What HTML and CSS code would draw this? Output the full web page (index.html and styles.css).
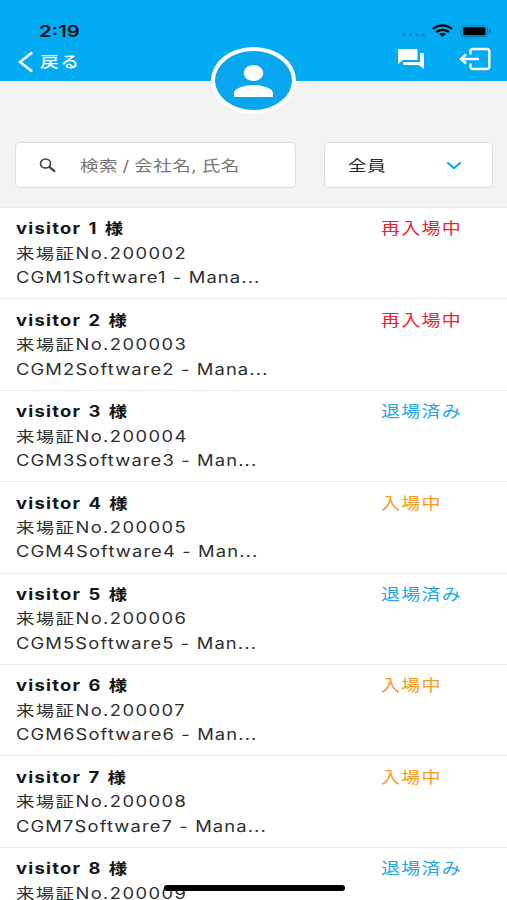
FILE: index.html
```html
<!DOCTYPE html>
<html lang="ja">
<head>
<meta charset="utf-8">
<title>来場者一覧</title>
<link rel="stylesheet" href="styles.css">
</head>
<body>
<header class="header">
  <div class="status">
    <span class="time">2:19</span>
    <svg class="signals" width="94" height="16" viewBox="0 0 94 16">
      <g fill="#1281b5"><circle cx="5" cy="12" r="1.5"/><circle cx="11.500" cy="12" r="1.5"/><circle cx="18" cy="12" r="1.5"/><circle cx="24.500" cy="12" r="1.5"/></g>
      <g fill="none" stroke="#000" stroke-width="2.300"><path d="M33.800 5.900Q43.500 -1.200 53.200 5.900"/><path d="M37.200 9Q43.500 4.600 49.800 9"/></g>
      <path d="M40 11Q43.500 8.800 47 11L43.500 13.800Z"/>
      <rect x="61.800" y="2.700" width="26.600" height="11" rx="3" fill="none" stroke="#0878a8"/>
      <rect x="64" y="4.200" width="22.500" height="8" rx="1.500"/>
      <path d="M90 6v4.500q2-.7 2-2.250t-2-2.250Z" fill="#0878a8"/>
    </svg>
  </div>
  <nav class="nav">
    <a class="back">
      <svg width="16" height="22" viewBox="0 0 16 22"><path d="M14.200 1.500L2 11L14.200 20.500" fill="none" stroke="#fff" stroke-width="2.500"/></svg>
      <span class="back-label">戻る</span>
    </a>
    <div class="actions">
      <svg width="26" height="20" viewBox="2 2 20 20" preserveAspectRatio="none" fill="#fff"><path d="M21 6h-2v9H6v2c0 .55.45 1 1 1h11l4 4V7c0-.55-.45-1-1-1zm-4 6V3c0-.55-.45-1-1-1H3c-.55 0-1 .45-1 1v14l4-4h10c.55 0 1-.45 1-1z"/></svg>
      <svg width="32" height="24" viewBox="0 0 32 24" fill="none" stroke="#fff" stroke-width="2.400"><path d="M11.500 7.500V4.500Q11.500 2 14.500 2H27.500Q30.300 2 30.300 4.500V19.500Q30.300 22 27.500 22H14.500Q11.500 22 11.500 19.500V16.500"/><path d="M20 12H2M7 7.500L2 12L7 16.500"/></svg>
    </div>
  </nav>
  <div class="avatar">
    <svg width="39" height="32" viewBox="4 4 16 16" preserveAspectRatio="none" fill="#fff"><path d="M12 12c2.210 0 4-1.790 4-4s-1.790-4-4-4-4 1.790-4 4 1.790 4 4 4zm0 2c-2.670 0-8 1.340-8 4v2h16v-2c0-2.660-5.330-4-8-4z"/></svg>
  </div>
</header>
<section class="filters">
  <div class="field search">
    <svg width="17" height="15" viewBox="0 0 17 15" fill="none" stroke="#444"><ellipse cx="6.500" cy="5.500" rx="5" ry="4.500" stroke-width="1.700"/><path d="M10.300 8.800L16 13.700" stroke-width="2.300"/></svg>
    <span class="placeholder">検索 / 会社名, 氏名</span>
  </div>
  <div class="field select">
    <span class="selected">全員</span>
    <svg width="16" height="9" viewBox="0 0 16 9"><path d="M1.300 1.500L8 7L14.700 1.500" fill="none" stroke="#13a7e8" stroke-width="2.200"/></svg>
  </div>
</section>
<main class="list">
  <article class="row"><div class="info"><b>visitor 1 様</b><span class="pass">来場証No.200002</span><span>CGM1Software1 - Mana...</span></div><span class="state again">再入場中</span></article>
  <article class="row"><div class="info"><b>visitor 2 様</b><span class="pass">来場証No.200003</span><span>CGM2Software2 - Mana...</span></div><span class="state again">再入場中</span></article>
  <article class="row"><div class="info"><b>visitor 3 様</b><span class="pass">来場証No.200004</span><span>CGM3Software3 - Man...</span></div><span class="state left">退場済み</span></article>
  <article class="row"><div class="info"><b>visitor 4 様</b><span class="pass">来場証No.200005</span><span>CGM4Software4 - Man...</span></div><span class="state inside">入場中</span></article>
  <article class="row"><div class="info"><b>visitor 5 様</b><span class="pass">来場証No.200006</span><span>CGM5Software5 - Man...</span></div><span class="state left">退場済み</span></article>
  <article class="row"><div class="info"><b>visitor 6 様</b><span class="pass">来場証No.200007</span><span>CGM6Software6 - Man...</span></div><span class="state inside">入場中</span></article>
  <article class="row"><div class="info"><b>visitor 7 様</b><span class="pass">来場証No.200008</span><span>CGM7Software7 - Mana...</span></div><span class="state inside">入場中</span></article>
  <article class="row"><div class="info"><b>visitor 8 様</b><span class="pass">来場証No.200009</span></div><span class="state left">退場済み</span></article>
</main>
<div class="home-bar"></div>
</body>
</html>
```
FILE: styles.css
```css
* { box-sizing: border-box; }
body {
  margin: 0;
  height: 900px;
  overflow: hidden;
  position: relative;
  background: #fff;
  color: #2e2e2e;
  font-family: Inter, "Noto Sans CJK JP", sans-serif;
  font-size: 15.3px;
}
svg { display: block; flex: none; }
.header {
  position: relative;
  height: 82px;
  padding-top: 20px;
  background: #03abf3;
  border-bottom: 1px solid #fff;
}
.status {
  display: flex;
  justify-content: space-between;
  height: 24px;
  padding: 3px 14px 0 39px;
}
.time {
  font-size: 15.5px;
  font-weight: 600;
  line-height: 17px;
  color: #06151c;
  transform: scaleX(1.31);
  transform-origin: left;
}
.nav {
  display: flex;
  justify-content: space-between;
  height: 32px;
  padding: 3px 16px 0 18px;
}
.back { display: flex; gap: 6px; height: 32px; padding-top: 4px; }
.back-label {
  color: #fff;
  font-weight: 500;
  line-height: 22px;
  letter-spacing: 1.2px;
  transform: scaleX(1.22);
  transform-origin: left;
}
.actions { display: flex; gap: 35px; }
.actions svg:first-child { margin-top: 2px; }
.avatar {
  position: absolute;
  left: 211px;
  top: 47px;
  width: 85px;
  height: 67px;
  border: 4px solid #fff;
  border-radius: 50%;
  background: #08a6ef;
  display: flex;
  align-items: center;
  justify-content: center;
}
.filters {
  display: flex;
  gap: 28px;
  height: 126px;
  padding: 60px 14px 0 15px;
  background: #f3f3f3;
  border-bottom: 1px solid #ebebeb;
}
.field {
  display: flex;
  align-items: center;
  height: 46px;
  background: #fff;
  border: 1px solid #dedede;
  border-radius: 5px;
}
.search { width: 281px; padding-left: 23px; gap: 24px; }
.select { width: 169px; padding: 0 30px 0 23px; justify-content: space-between; }
.placeholder, .selected {
  white-space: nowrap;
  letter-spacing: .7px;
  margin-top: -2px;
  transform: scaleX(1.21);
  transform-origin: left;
}
.placeholder { color: #757575; letter-spacing: .4px; word-spacing: -.9px; }
.row {
  display: flex;
  height: 91.4px;
  padding: 9.4px 16px 0 15.5px;
  border-bottom: 1px solid #ebebeb;
}
.row:last-child { height: 83px; border-bottom: 0; }
.info {
  display: flex;
  flex-direction: column;
  width: 365px;
}
.info b, .info span, .state {
  line-height: 24.4px;
  height: 24.4px;
  white-space: nowrap;
  letter-spacing: .94px;
  transform: scaleX(1.2);
  transform-origin: left;
}
.info b { font-weight: 700; color: #151515; letter-spacing: 1.05px; word-spacing: 1.3px; }
.info .pass { letter-spacing: 1.2px; }
.state { font-size: 15.8px; letter-spacing: 1.1px; }
.again { color: #f2222c; }
.left { color: #22a7ec; }
.inside { color: #f79a25; }
.home-bar {
  position: absolute;
  left: 164px;
  top: 885px;
  width: 181px;
  height: 6px;
  border-radius: 3px;
  background: #000;
}
```
